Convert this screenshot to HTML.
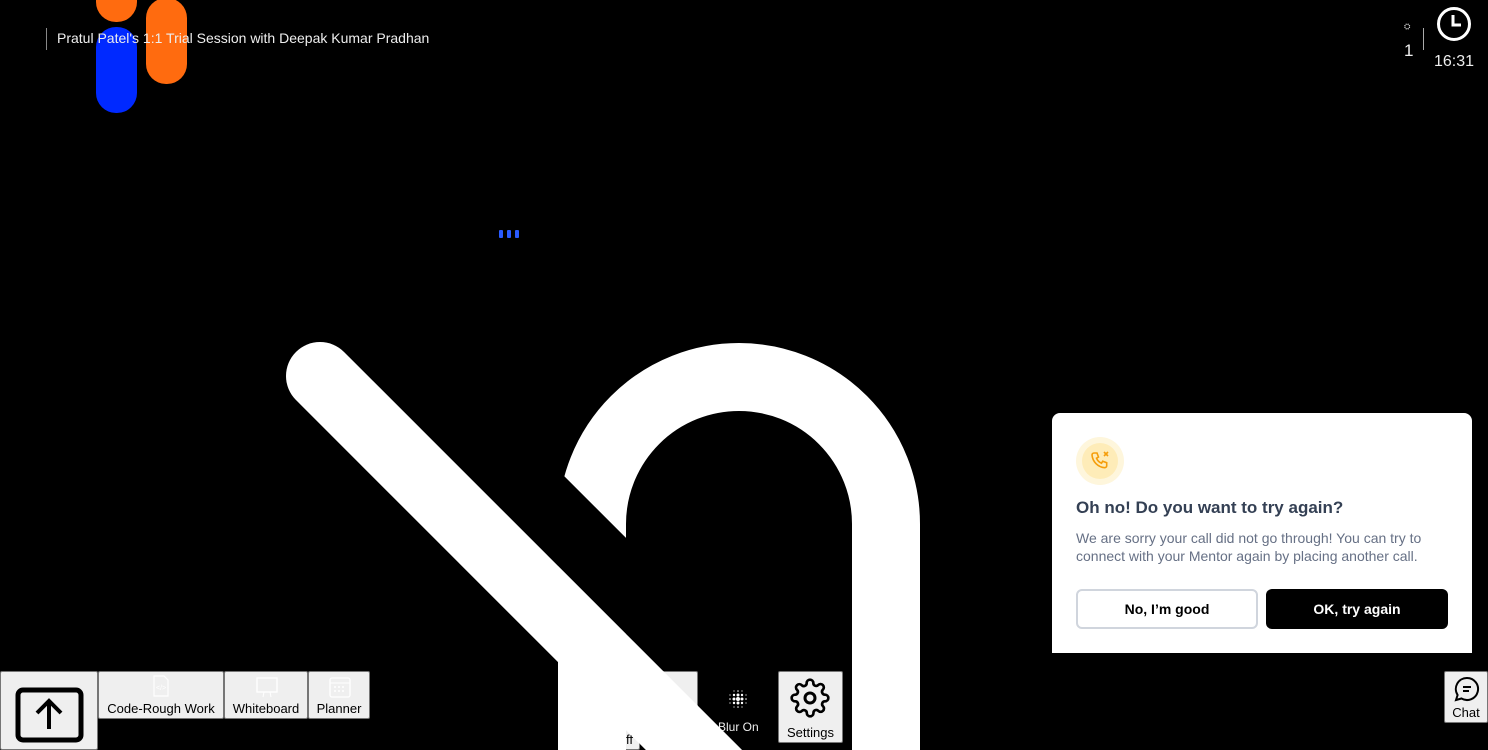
<!DOCTYPE html>
<html><head><meta charset="utf-8"><style>
*{margin:0;padding:0;box-sizing:border-box}
html,body{width:1488px;height:750px;overflow:hidden}
body{background:#000;position:relative;font-family:"Liberation Sans",sans-serif}
.abs{position:absolute}
.btn{position:absolute;background:#efefef;border:1px solid #767676;border-radius:2px;color:#000;font-size:13px;text-align:center}
</style></head><body>
<div class="abs" style="left:96px;top:-20px;width:41px;height:42px;border-radius:20px;background:#ff6b0f"></div>
<div class="abs" style="left:96px;top:27px;width:41px;height:86px;border-radius:20px;background:#0029ff"></div>
<div class="abs" style="left:146px;top:-2px;width:41px;height:86px;border-radius:20px;background:#ff6b0f"></div>
<div class="abs" style="left:46px;top:28px;width:1px;height:22px;background:#888"></div>
<div class="abs" style="left:57px;top:30px;color:#eee;font-size:14px">Pratul Patel's 1:1 Trial Session with Deepak Kumar Pradhan</div>
<div class="abs" style="left:1404px;top:22px;color:#ccc;font-size:8px">⛭</div>
<div class="abs" style="left:1404px;top:41px;color:#eee;font-size:17px">1</div>
<div class="abs" style="left:1423px;top:28px;width:1px;height:22px;background:#aaa"></div>
<svg class="abs" style="left:1436px;top:6px" width="36" height="36" viewBox="0 0 36 36"><circle cx="18" cy="18" r="15.5" fill="none" stroke="#fff" stroke-width="3"/><path d="M17 9v10h8" fill="none" stroke="#fff" stroke-width="3"/></svg>
<div class="abs" style="left:1434px;top:53px;color:#eee;font-size:16px">16:31</div>
<div class="abs" style="left:499px;top:230px;width:4px;height:8px;background:#2a5bff;border-radius:1px"></div>
<div class="abs" style="left:507px;top:230px;width:4px;height:8px;background:#2a5bff;border-radius:1px"></div>
<div class="abs" style="left:515px;top:230px;width:4px;height:8px;background:#2a5bff;border-radius:1px"></div>

<div class="btn" style="left:0;top:671px;width:98px;height:79px"><svg style="position:absolute;left:14px;top:15px" width="70" height="56" viewBox="0 0 70 56"><rect x="3" y="3" width="63" height="50" rx="5" fill="none" stroke="#000" stroke-width="5"/><path d="M34 42V14M22 26l12-12 12 12" fill="none" stroke="#000" stroke-width="4"/></svg></div>
<div class="btn" style="left:98px;top:671px;width:126px;height:48px"><svg style="position:absolute;left:53px;top:3px" width="18" height="22"><path d="M2 1h10l4 4v16H2z" fill="none" stroke="#fff" stroke-width="1.2"/><text x="4" y="15" font-size="7" fill="#fff">&lt;/&gt;</text></svg><div style="position:absolute;left:0;right:0;top:29px">Code-Rough Work</div></div>
<div class="btn" style="left:224px;top:671px;width:84px;height:48px"><svg style="position:absolute;left:30px;top:4px" width="24" height="22"><rect x="2" y="2" width="20" height="14" fill="none" stroke="#fff" stroke-width="1.3"/><path d="M9 16l-1 5M15 16l1 5" stroke="#fff"/></svg><div style="position:absolute;left:0;right:0;top:29px">Whiteboard</div></div>
<div class="btn" style="left:308px;top:671px;width:62px;height:48px"><svg style="position:absolute;left:19px;top:3px" width="24" height="24"><rect x="2" y="3" width="20" height="19" rx="2" fill="none" stroke="#fff" stroke-width="1.3"/><path d="M2 8h20" stroke="#fff"/><g fill="#fff"><circle cx="7" cy="12" r="1"/><circle cx="11" cy="12" r="1"/><circle cx="15" cy="12" r="1"/><circle cx="7" cy="16" r="1"/><circle cx="11" cy="16" r="1"/><circle cx="15" cy="16" r="1"/></g></svg><div style="position:absolute;left:0;right:0;top:29px">Planner</div></div>
<div class="btn" style="left:650px;top:671px;width:48px;height:48px"></div>
<div class="btn" style="left:610px;top:728px;width:30px;height:22px;text-align:left;padding-left:15px;padding-top:3px">ff</div>
<svg class="abs" style="left:726px;top:687px" width="24" height="24"><g fill="#fff"><circle cx="12" cy="12" r="2"/><circle cx="8" cy="12" r="1.5"/><circle cx="16" cy="12" r="1.5"/><circle cx="12" cy="8" r="1.5"/><circle cx="12" cy="16" r="1.5"/><circle cx="8" cy="8" r="1.2"/><circle cx="16" cy="8" r="1.2"/><circle cx="8" cy="16" r="1.2"/><circle cx="16" cy="16" r="1.2"/><circle cx="4" cy="12" r=".8"/><circle cx="20" cy="12" r=".8"/><circle cx="12" cy="4" r=".8"/><circle cx="12" cy="20" r=".8"/><circle cx="4" cy="8" r=".6"/><circle cx="20" cy="8" r=".6"/><circle cx="4" cy="16" r=".6"/><circle cx="20" cy="16" r=".6"/><circle cx="8" cy="4" r=".6"/><circle cx="16" cy="4" r=".6"/><circle cx="8" cy="20" r=".6"/><circle cx="16" cy="20" r=".6"/></g></svg>
<div class="abs" style="left:718px;top:720px;color:#eee;font-size:12px">Blur On</div>
<div class="btn" style="left:778px;top:671px;width:65px;height:72px"><svg style="position:absolute;left:11px;top:6px" width="40" height="40" viewBox="0 0 24 24"><path d="M12 15a3 3 0 100-6 3 3 0 000 6z" fill="none" stroke="#000" stroke-width="1.8"/><path d="M19.4 15a1.65 1.65 0 00.33 1.820l.06.06a2 2 0 11-2.830 2.830l-.06-.06a1.65 1.65 0 00-1.820-.33 1.65 1.65 0 00-1 1.510V21a2 2 0 11-4 0v-.09A1.65 1.65 0 009 19.4a1.65 1.65 0 00-1.820.33l-.06.06a2 2 0 11-2.830-2.830l.06-.06A1.65 1.65 0 004.68 15a1.65 1.65 0 00-1.510-1H3a2 2 0 110-4h.09A1.65 1.65 0 004.6 9a1.65 1.65 0 00-.33-1.820l-.06-.06a2 2 0 112.830-2.830l.06.06A1.65 1.65 0 009 4.68a1.65 1.65 0 001-1.510V3a2 2 0 114 0v.09a1.65 1.65 0 001 1.510 1.65 1.65 0 001.820-.33l.06-.06a2 2 0 112.830 2.830l-.06.06A1.65 1.65 0 0019.4 9a1.65 1.65 0 001.510 1H21a2 2 0 110 4h-.09a1.65 1.65 0 00-1.510 1z" fill="none" stroke="#000" stroke-width="1.6"/></svg><div style="position:absolute;left:0;right:0;top:53px">Settings</div></div>

<svg class="abs" style="left:0;top:0" width="1488" height="750">
<path d="M592 750V524a147 147 0 0 1 294 0V750" fill="none" stroke="#fff" stroke-width="68"/>
<path d="M520 480L680 640" stroke="#000" stroke-width="68"/>
<path d="M320 376L760 816" stroke="#fff" stroke-width="68" stroke-linecap="round"/>
</svg>

<div class="btn" style="left:1444px;top:671px;width:44px;height:52px"><svg style="position:absolute;left:9px;top:4px" width="26" height="26" viewBox="0 0 26 26"><path d="M13 2a11 11 0 11-5.5 20.5L2 24l1.6-5A11 11 0 0113 2z" fill="none" stroke="#000" stroke-width="2"/><path d="M9 11h8M9 15h6" stroke="#000" stroke-width="2"/></svg><div style="position:absolute;left:0;right:0;top:33px">Chat</div></div>

<div class="abs" style="left:1052px;top:413px;width:420px;height:240px;background:#fff;border-radius:8px 8px 0 0">
<div class="abs" style="left:24px;top:24px;width:48px;height:48px;border-radius:50%;background:#fef6dc"></div>
<div class="abs" style="left:30px;top:30px;width:36px;height:36px;border-radius:50%;background:#feecb8"></div>
<svg class="abs" style="left:37px;top:36px" width="24" height="24" viewBox="0 0 24 24"><path d="M5 4h3l1.5 4-2 1.2a9 9 0 005 5l1.2-2 4 1.5v3a2 2 0 01-2 2A14 14 0 013 6a2 2 0 012-2z" fill="none" stroke="#f59e0b" stroke-width="1.6"/><path d="M15 3l4 4M19 3l-4 4" stroke="#f59e0b" stroke-width="1.6"/></svg>
<div class="abs" style="left:24px;top:85px;font-size:17px;font-weight:bold;color:#344054">Oh no! Do you want to try again?</div>
<div class="abs" style="left:24px;top:116px;width:370px;font-size:14px;line-height:18px;color:#667085">We are sorry your call did not go through! You can try to connect with your Mentor again by placing another call.</div>
<div class="abs" style="left:24px;top:176px;width:182px;height:40px;border:2px solid #d0d5dd;border-radius:6px;text-align:center;line-height:36px;font-size:14px;font-weight:bold;color:#000">No, I’m good</div>
<div class="abs" style="left:214px;top:176px;width:182px;height:40px;background:#000;border-radius:6px;text-align:center;line-height:40px;font-size:14px;font-weight:bold;color:#fff">OK, try again</div>
</div>
</body></html>
